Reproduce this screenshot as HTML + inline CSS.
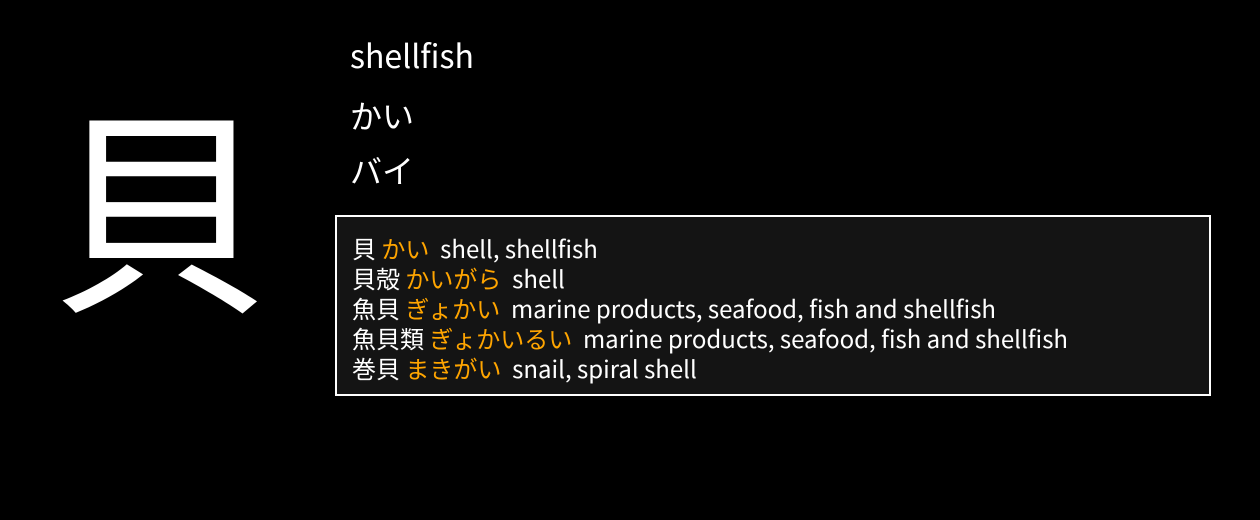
<!DOCTYPE html>
<html><head><meta charset="utf-8"><style>
body{margin:0;width:1260px;height:520px;background:#000;color:#fff;font-family:"Noto Sans CJK JP","Liberation Sans",sans-serif;overflow:hidden;position:relative}
.k{position:absolute;left:50px;top:75px;font-size:220px;line-height:250px}
.m{position:absolute;left:350px;font-size:32px;line-height:40px}
.box{position:absolute;left:335px;top:215px;width:872px;height:177px;border:2px solid #fff;background:#141414;box-sizing:content-box}
.lines{position:absolute;left:15px;top:16px;font-size:24px;line-height:30px;white-space:nowrap}
.o{color:#ffa500}
</style></head><body>
<div class="k">貝</div>
<div class="m" style="top:35px">shellfish</div>
<div class="m" style="top:95px">かい</div>
<div class="m" style="top:150px">バイ</div>
<div class="box"><div class="lines">
<div>貝&nbsp;<span class="o">かい</span>&nbsp;&nbsp;shell, shellfish</div>
<div>貝殻&nbsp;<span class="o">かいがら</span>&nbsp;&nbsp;shell</div>
<div>魚貝&nbsp;<span class="o">ぎょかい</span>&nbsp;&nbsp;marine products, seafood, fish and shellfish</div>
<div>魚貝類&nbsp;<span class="o">ぎょかいるい</span>&nbsp;&nbsp;marine products, seafood, fish and shellfish</div>
<div>巻貝&nbsp;<span class="o">まきがい</span>&nbsp;&nbsp;snail, spiral shell</div>
</div></div>
</body></html>
